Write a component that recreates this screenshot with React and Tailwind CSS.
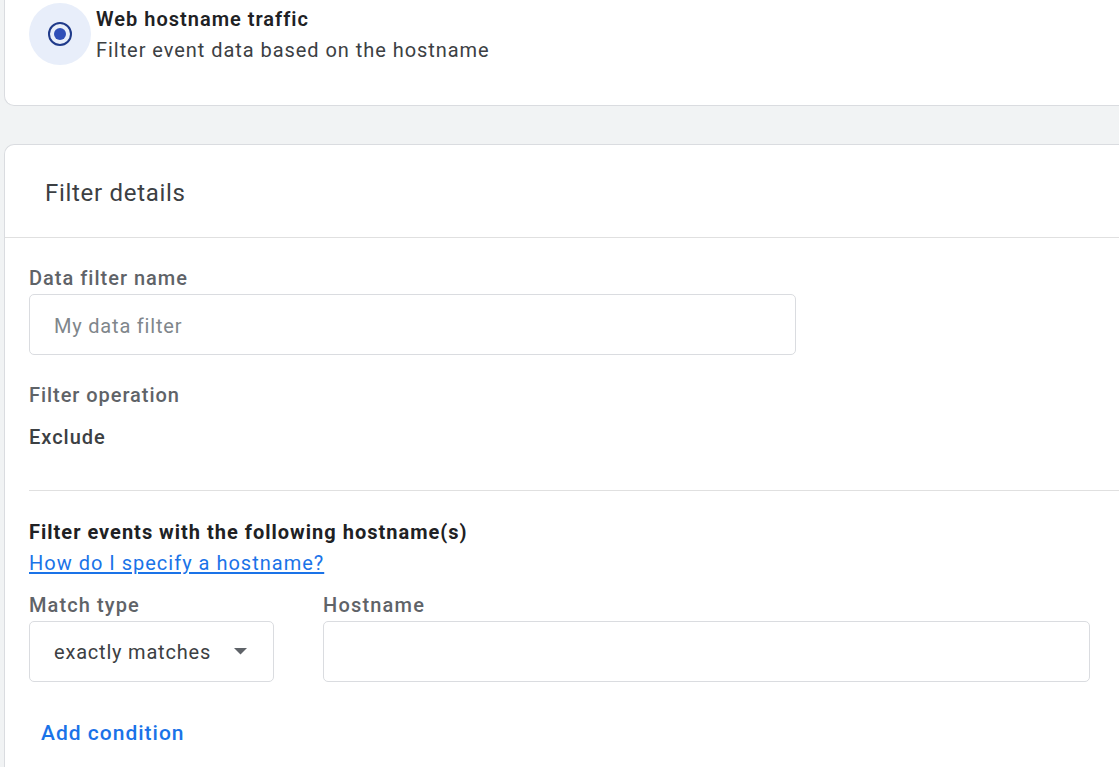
import React from "react";

const FilterPage = () => {
  return (
    <div
      className="min-h-[767px] w-[1119px] overflow-hidden bg-[#f1f3f4] pl-[4px]"
      style={{ fontFamily: "Roboto, 'Noto Sans', sans-serif" }}
    >
      {/* selected filter type */}
      <div className="flex h-[106px] items-start gap-[5px] rounded-bl-[10px] border-b border-l border-[#dadce0] bg-white pl-[24px]">
        <div className="mt-[3px] flex h-[62px] w-[62px] items-center justify-center rounded-full bg-[#e8eefa]">
          <div className="flex h-[24px] w-[24px] items-center justify-center rounded-full border-[2.5px] border-[#1f3a8a]">
            <div className="h-[12px] w-[12px] rounded-full bg-[#2f4fb8]" />
          </div>
        </div>
        <div className="pt-[6px]">
          <div className="text-[20px] font-semibold leading-[26px] tracking-[1px] text-[#202124]">
            Web hostname traffic
          </div>
          <div className="mt-[5px] text-[20px] leading-[26px] tracking-[0.95px] text-[#3c4043]">
            Filter event data based on the hostname
          </div>
        </div>
      </div>

      {/* filter details */}
      <div className="mt-[38px] rounded-tl-[10px] border-l border-t border-[#dadce0] bg-white pb-[20px]">
        <div className="flex h-[93px] items-center border-b border-[#e0e0e0] pl-[40px] pt-[3px]">
          <h2 className="text-[24px] font-normal tracking-[0.7px] text-[#3c4043]">Filter details</h2>
        </div>

        <div className="pl-[24px] pt-[28px]">
          <label className="block text-[20px] font-medium leading-[24px] tracking-[1px] text-[#5f6368]">
            Data filter name
          </label>
          <div className="mt-[4px] flex h-[61px] w-[767px] items-center rounded-[5px] border border-[#dadce0] px-[24px] pt-[2px]">
            <span className="text-[20px] tracking-[0.8px] text-[#80868b]">My data filter</span>
          </div>

          <div className="mt-[28px] text-[20px] font-medium leading-[24px] tracking-[0.95px] text-[#5f6368]">
            Filter operation
          </div>
          <div className="mt-[18px] text-[20px] font-medium leading-[24px] tracking-[1px] text-[#3c4043]">
            Exclude
          </div>

          <div className="mt-[41px] border-t border-[#e0e0e0]" />

          <div className="mt-[29px] text-[20px] font-bold leading-[24px] tracking-[1px] text-[#202124]">
            Filter events with the following hostname(s)
          </div>
          <a
            href="#"
            className="mt-[7px] block w-fit text-[20px] leading-[24px] tracking-[1px] text-[#1a73e8] underline underline-offset-2"
          >
            How do I specify a hostname?
          </a>

          <div className="mt-[16px] flex gap-[49px]">
            <div>
              <div className="text-[20px] font-medium leading-[28px] tracking-[1.1px] text-[#5f6368]">
                Match type
              </div>
              <div className="mt-[2px] flex h-[61px] w-[245px] items-center justify-between rounded-[5px] border border-[#dadce0] pl-[24px] pr-[26px]">
                <span className="text-[20px] tracking-[0.8px] text-[#3c4043]">exactly matches</span>
                <svg width="13" height="7" viewBox="0 0 13 7">
                  <path d="M0 0 L13 0 L6.5 6.5 Z" fill="#5f6368" />
                </svg>
              </div>
            </div>
            <div>
              <div className="text-[20px] font-medium leading-[28px] tracking-[1.2px] text-[#5f6368]">
                Hostname
              </div>
              <div className="mt-[2px] h-[61px] w-[767px] rounded-[5px] border border-[#dadce0]" />
            </div>
          </div>

          <button className="mt-[39px] pl-[12px] text-[21px] font-medium leading-[24px] tracking-[1px] text-[#1a73e8]">
            Add condition
          </button>
        </div>
      </div>
    </div>
  );
};

export default function App() {
  return <FilterPage />;
}
